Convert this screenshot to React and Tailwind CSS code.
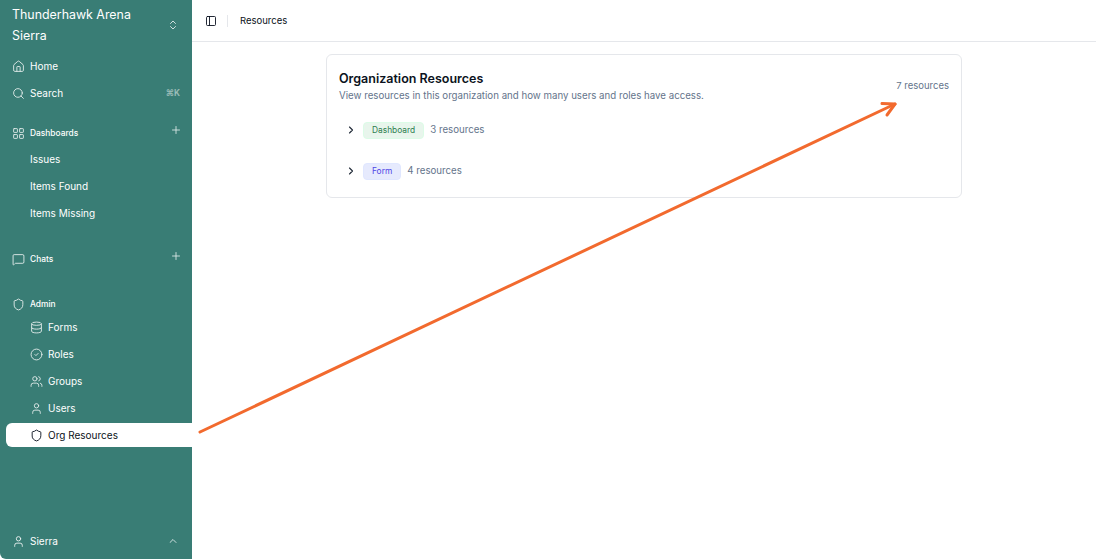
import React from "react";
import { House, Search, LayoutGrid, MessageSquare, Shield, CircleCheck, Users, User, ChevronsUpDown, ChevronUp, ChevronRight, Plus, PanelLeft } from "lucide-react";

function DbIcon({ size, strokeWidth, className }) {
  return (
    <svg width={size} height={size} viewBox="0 0 24 24" fill="none" stroke="currentColor" strokeWidth={strokeWidth} className={className}>
      <ellipse cx="12" cy="5" rx="9" ry="3" />
      <path d="M3 5v14c0 1.700 4 3 9 3s9-1.300 9-3V5" />
      <path d="M3 12c0 1.700 4 3 9 3s9-1.300 9-3" />
    </svg>
  );
}

function Item({ icon: I, label, active }) {
  return (
    <div className={`flex h-[24px] mb-[3px] items-center text-[10px] leading-none ${active ? "bg-white text-[#0b1220] rounded-l-[6px] ml-[6px] pl-[24px]" : "text-white pl-[30px]"}`}>
      {I && <I size={13} strokeWidth={1.7} className={`mr-[5px] ${active ? "" : "opacity-85"}`} />}
      <span>{label}</span>
    </div>
  );
}

function Section({ icon: I, label, plus, className }) {
  return (
    <div className={`flex h-[24px] items-center pl-[12px] pr-[10px] text-white ${className}`}>
      <I size={13} strokeWidth={1.7} className="mr-[5px] opacity-85" />
      <span className="text-[8.4px] font-medium flex-1 mt-[1px]">{label}</span>
      {plus && <Plus size={12} strokeWidth={1.7} className="opacity-85 -mt-[7px]" />}
    </div>
  );
}

export default function App() {
  return (
    <div className="relative flex h-[559px] w-[1096px] overflow-hidden bg-white font-['Inter',sans-serif]">
      <aside className="flex w-[192px] shrink-0 flex-col rounded-bl-[6px] bg-[#397d75]">
        <div className="flex items-center pl-[12px] pr-[13px] pt-[4px] h-[54px] pb-[9px] text-white">
          <div className="flex-1 text-[12.4px] leading-[21px]">
            <div>Thunderhawk Arena</div>
            <div>Sierra</div>
          </div>
          <ChevronsUpDown size={12} strokeWidth={1.7} className="opacity-90" />
        </div>
        <div className="flex h-[24px] mb-[3px] items-center pl-[12px] text-[10px] text-white">
          <House size={13} strokeWidth={1.7} className="mr-[5px] opacity-85" />Home
        </div>
        <div className="flex h-[24px] items-center pl-[12px] pr-[12px] text-[10px] text-white">
          <Search size={13} strokeWidth={1.7} className="mr-[5px] opacity-85" />
          <span className="flex-1">Search</span>
          <span className="text-[8.5px] font-semibold opacity-50">⌘K</span>
        </div>
        <Section icon={LayoutGrid} label="Dashboards" plus className="mt-[16px] mb-[2px]" />
        <Item label="Issues" />
        <Item label="Items Found" />
        <Item label="Items Missing" />
        <Section icon={MessageSquare} label="Chats" plus className="mt-[19px]" />
        <Section icon={Shield} label="Admin" className="mt-[21px] -mb-[1px]" />
        <Item icon={DbIcon} label="Forms" />
        <Item icon={CircleCheck} label="Roles" />
        <Item icon={Users} label="Groups" />
        <Item icon={User} label="Users" />
        <Item active icon={Shield} label="Org Resources" />
        <div className="mt-auto flex h-[36px] items-center pl-[12px] pr-[13px] text-[10px] text-white">
          <User size={13} strokeWidth={1.7} className="mr-[5px] opacity-90" />
          <span className="flex-1">Sierra</span>
          <ChevronUp size={12} strokeWidth={1.7} className="opacity-90" />
        </div>
      </aside>
      <main className="flex flex-1 flex-col">
        <header className="flex h-[42px] items-center border-b border-[#e5e7eb] pl-[13px] text-[9.5px] text-[#0b1220]">
          <PanelLeft size={12} strokeWidth={1.8} />
          <div className="mx-[10px] h-[12px] w-px bg-[#e5e7eb]" />
          <span className="ml-[2px] mt-[1px]">Resources</span>
        </header>
        <section className="ml-[134px] mt-[12px] h-[144px] w-[636px] rounded-[6px] border border-[#e5e7eb] pl-[12px] pr-[12px] pt-[15px]">
          <div className="flex items-center justify-between">
            <div>
              <h1 className="text-[12.5px] font-semibold leading-[18px] text-[#0b1220]">Organization Resources</h1>
              <p className="mt-[1px] text-[9.7px] leading-[14px] text-[#64748b]">View resources in this organization and how many users and roles have access.</p>
            </div>
            <span className="text-[9.5px] text-[#64748b]">7 resources</span>
          </div>
          <div className="mt-[18px] flex h-[18px] items-center text-[9.7px] text-[#64748b]">
            <ChevronRight size={12} strokeWidth={2.2} className="ml-[6px] mr-[6px] text-[#1f2937]" />
            <span className="flex h-[17px] items-center rounded-[4px] border border-[#dcfce7] bg-[#e8f5ec] px-[8px] pt-[1px] text-[8.4px] text-[#2e7d4f]">Dashboard</span>
            <span className="ml-[6px]">3 resources</span>
          </div>
          <div className="mt-[23px] flex h-[18px] items-center text-[9.7px] text-[#64748b]">
            <ChevronRight size={12} strokeWidth={2.2} className="ml-[6px] mr-[6px] text-[#1f2937]" />
            <span className="flex h-[17px] items-center rounded-[4px] border border-[#e0e7ff] bg-[#e6eafd] px-[8px] pt-[1px] text-[8.4px] text-[#4f46e5]">Form</span>
            <span className="ml-[6px]">4 resources</span>
          </div>
        </section>
      </main>
      <svg className="pointer-events-none absolute left-0 top-0" width="1096" height="559" fill="none" stroke="#f26a2e" strokeWidth="3" strokeLinecap="round" strokeLinejoin="round">
        <path d="M200 432 L895 104" />
        <path d="M882 103.500 L895 104 L887 115" />
      </svg>
    </div>
  );
}
